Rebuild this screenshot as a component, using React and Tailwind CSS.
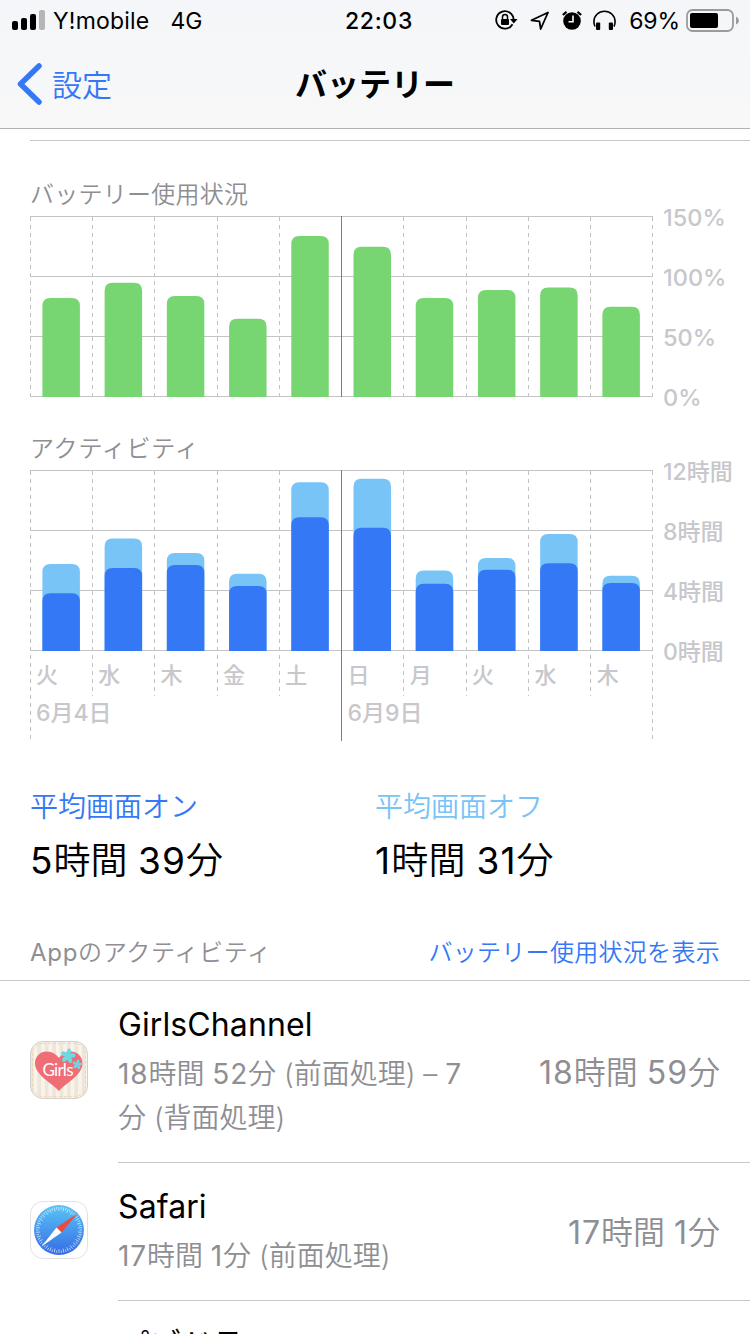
const days = [
    { label: "火", level: 298, off: 564, on: 593.3 },
    { label: "水", level: 282.7, off: 538.5, on: 568 },
    { label: "木", level: 296, off: 553, on: 565 },
    { label: "金", level: 318.7, off: 573.7, on: 586 },
    { label: "土", level: 236, off: 482.3, on: 517.3 },
    { label: "日", level: 246.8, off: 478.7, on: 527.7 },
    { label: "月", level: 298, off: 570.5, on: 583.7 },
    { label: "火", level: 290, off: 558, on: 569.7 },
    { label: "水", level: 287.5, off: 534, on: 563.3 },
    { label: "木", level: 306.8, off: 575.8, on: 583 },
];

const STEP = 62.22;

const barPath = (i, top, bottom) => {
    const x = 12.4 + i * STEP;
    return `M${x} ${bottom}V${top + 8}q0-8 8-8h21.5q8 0 8 8V${bottom}z`;
};

// Latin runs are set a little heavier and wider than the Japanese around them
const Mixed = ({ text }) =>
    text.split(/([A-Za-z0-9]+)/).map((part, i) =>
        i % 2 ? (
            <span key={i} className="font-normal tracking-[0.03em]">{part}</span>
        ) : (
            part
        )
    );

// Grid lines shared by both charts, the dark one marks the start of the week
const Grid = ({ labelEnd, weekEnd }) => (
    <>
        {[0, 60, 120, 180].map((y) => (
            <path key={y} d={`M0 ${y + 0.5}H623`} stroke="#c4c4c6" />
        ))}
        {Array.from({ length: 11 }, (_, i) => {
            const x = Math.round(i * STEP) + 0.5;
            const end = i % 5 === 0 ? weekEnd : labelEnd;
            return i === 5 ? (
                <path key={i} d={`M${x} 0V${weekEnd}`} stroke="#7e7e82" />
            ) : (
                <path key={i} d={`M${x} 1V${end}`} stroke="#c2c2c4" strokeDasharray="4 4" />
            );
        })}
    </>
);

const Axis = ({ labels, className }) => (
    <div className={`-mt-[28px] ml-[10px] flex flex-col font-medium text-[#c7c7cc] ${className}`}>
        {labels.map((label) => (
            <div key={label} className="flex h-[60px] shrink-0 items-center whitespace-nowrap leading-8">
                {label}
            </div>
        ))}
    </div>
);

const StatusBar = () => (
    <div className="grid h-10 grid-cols-3 items-center pl-3 pr-[11px] text-[23px] leading-8">
        <div className="flex items-center whitespace-nowrap">
            <svg width="33" height="20" viewBox="0 0 33 20" className="shrink-0">
                <rect x="0" y="11" width="6" height="9" rx="2" />
                <rect x="9" y="8" width="6" height="12" rx="2" />
                <rect x="18" y="4" width="6" height="16" rx="2" />
                <rect x="27" y="0" width="6" height="20" rx="2" fill="#b5b5b7" />
            </svg>
            <span className="ml-2 pt-0.5 tracking-[0.2px]">Y!mobile</span>
            <span className="ml-[21px] pt-0.5">4G</span>
        </div>
        <div className="pl-[7px] pt-0.5 text-center font-[550] tracking-[0.7px]">22:03</div>
        <div className="flex items-center justify-end whitespace-nowrap">
            <svg width="24" height="20" viewBox="0 0 24 20" className="shrink-0" fill="none" stroke="#000" strokeWidth="1.8">
                <path d="M17.5 14.2A8.7 8.7 0 1 1 18.6 9.5" />
                <path d="M15 9h7.5l-3.7 4.5z" fill="#000" stroke="none" />
                <rect x="6" y="9" width="8" height="6" rx="1" fill="#000" stroke="none" />
                <path d="M7.5 9.5V7a2.5 2.5 0 0 1 5 0v2.5" strokeWidth="1.5" />
            </svg>
            <svg width="20" height="20" viewBox="0 0 20 20" className="ml-[11px] shrink-0" fill="none" stroke="#000" strokeWidth="1.8" strokeLinejoin="round">
                <path d="M18 2.5 1.5 10.3l8 1 1.2 7.7z" />
            </svg>
            <svg width="20" height="20" viewBox="0 0 20 20" className="ml-[12px] shrink-0">
                <circle cx="10" cy="11" r="8.8" />
                <path d="M.8 5 4.500 1.800M19.200 5 15.500 1.800" stroke="#000" strokeWidth="2.200" />
                <path d="M11 5.500v6.200H6.500" fill="none" stroke="#fff" strokeWidth="1.600" />
            </svg>
            <svg width="23" height="20" viewBox="0 0 23 20" className="ml-[11px] shrink-0">
                <path d="M2 16.500C1 14.500.9 12.500.9 11.500a10.600 10.300 0 0 1 21.200 0c0 1 0 3-1.100 5" fill="none" stroke="#000" strokeWidth="1.600" />
                <rect x="3" y="12.500" width="4.200" height="7.500" rx="1" />
                <rect x="15.800" y="12.500" width="4.200" height="7.500" rx="1" />
            </svg>
            <span className="ml-[13px] pt-0.5 tracking-[-0.1px]">69%</span>
            <svg width="53" height="24" viewBox="0 0 53 24" className="ml-[6px] shrink-0">
                <rect x="1" y="2" width="46" height="21" rx="5.500" fill="none" stroke="#9b9b9d" strokeWidth="1.800" />
                <rect x="4" y="5" width="28" height="15" rx="2" />
                <path d="M50 8.500q3 1.500 3 4t-3 4z" fill="#9b9b9d" />
            </svg>
        </div>
    </div>
);

const Flower = ({ x, y, r }) => (
    <g transform={`translate(${x} ${y}) scale(${r})`} fill="#69dce8">
        {[10, 82, 154, 226, 298].map((a) => (
            <ellipse key={a} cx="0" cy="-4.500" rx="2.300" ry="3.500" transform={`rotate(${a})`} />
        ))}
        <circle r="1.500" />
    </g>
);

const GirlsIcon = () => (
    <svg width="58" height="58" viewBox="0 0 58 58">
        <defs>
            <pattern id="stripes" width="7.400" height="58" patternUnits="userSpaceOnUse">
                <rect width="7.400" height="58" fill="#f8f4ed" />
                <rect width="3.700" height="58" fill="#efe6da" />
            </pattern>
        </defs>
        <rect x=".5" y=".5" width="57" height="57" rx="12.500" fill="url(#stripes)" stroke="#d3d0cb" />
        <rect x="2.500" y="2.500" width="53" height="53" rx="10.500" fill="none" stroke="#edd7b0" strokeDasharray="3 2" />
        <path d="M29 50C23 43 5 34 5 22.500 5 15 10.500 10.500 16.500 10.500c6 0 10 3 12.500 6.500 2.500-3.500 6.500-6.500 12-6.500 6.500 0 11.500 5 11.500 12C52.500 34 35 43 29 50z" fill="#ef6d75" />
        <Flower x={38} y={15} r={0.95} />
        <Flower x={47.5} y={23.5} r={0.62} />
        <text x="12.500" y="34.500" fill="#fff" fontFamily="Lato" fontSize="17" fontWeight="400" textLength="31">Girls</text>
    </svg>
);

const SafariIcon = () => (
    <svg width="58" height="58" viewBox="0 0 58 58">
        <defs>
            <linearGradient id="compass" x1="0" y1="0" x2="0" y2="1">
                <stop offset="0" stopColor="#5ac4f6" />
                <stop offset="1" stopColor="#356be6" />
            </linearGradient>
        </defs>
        <rect x=".5" y=".5" width="57" height="57" rx="12.500" fill="#fff" stroke="#e2e2e2" />
        <circle cx="29" cy="29" r="25" fill="url(#compass)" />
        {Array.from({ length: 60 }, (_, i) => (
            <path
                key={i}
                d={i % 2 ? "M29 6v2.500" : "M29 6v4"}
                stroke="#fff"
                strokeWidth=".7"
                opacity=".85"
                transform={`rotate(${i * 6} 29 29)`}
            />
        ))}
        <path d="M47.500 12.500 31.500 31.500 26.500 26.500z" fill="#eb4b3d" />
        <path d="M11.500 45.500 26.500 26.500 31.500 31.500z" fill="#fff" />
    </svg>
);

const AppRow = ({ icon, name, detail, total, className }) => (
    <div className={`flex shrink-0 pl-[30px] ${className}`}>
        <div className="flex w-[88px] items-center pb-1">{icon}</div>
        <div className="flex flex-1 items-center justify-between border-b border-[#c8c7cc] pr-[30px]">
            <div>
                <div className="text-[32px] leading-[44px] tracking-[0.1px] text-black">{name}</div>
                <div className="mt-[5px] whitespace-pre-line text-[28px] font-[350] leading-[44px] text-[#8e8e93]">
                    <Mixed text={detail} />
                </div>
            </div>
            <div className="whitespace-nowrap pt-0.5 text-[32px] font-[350] leading-[44px] text-[#8e8e93]">
                <Mixed text={total} />
            </div>
        </div>
    </div>
);

export default function App() {
    return (
        <div className="flex h-[1334px] w-[750px] flex-col overflow-hidden bg-white font-['Inter','Noto_Sans_CJK_JP',sans-serif] text-black">
            <header className="h-[129px] shrink-0 border-b border-[#b2b2b2] bg-linear-to-b from-[#f4f6f9] to-[#f8f8f8]">
                <StatusBar />
                <div className="grid h-[88px] grid-cols-3 items-center">
                    <div className="flex items-center pl-[17px] text-[30px] font-[350] leading-10 text-[#3478f6]">
                        <svg width="26" height="42" viewBox="0 0 26 42" fill="none" stroke="#3478f6" strokeWidth="5.500" strokeLinecap="round" strokeLinejoin="round">
                            <path d="M22 3 3.500 21 22 39" />
                        </svg>
                        <span className="ml-[9px] whitespace-nowrap pt-px">設定</span>
                    </div>
                    <h1 className="whitespace-nowrap pt-0.5 text-center text-[32px] font-bold leading-10">バッテリー</h1>
                </div>
            </header>

            <main className="flex flex-1 flex-col">
                <div className="ml-[30px] mt-[11px] h-px shrink-0 bg-[#c8c7cc]" />

                <h2 className="flex h-[75px] shrink-0 items-end pb-[3px] pl-[30px] text-[24px] font-[350] leading-9 tracking-[0.25px] text-[#8e8e93]">
                    バッテリー使用状況
                </h2>
                <div className="flex h-[181px] shrink-0 pl-[30px]">
                    <svg width="623" height="181" viewBox="0 0 623 181" fill="none" className="shrink-0">
                        <Grid labelEnd={181} weekEnd={181} />
                        {days.map((d, i) => (
                            <path key={i} d={barPath(i, d.level - 216, 181)} fill="#77d672" />
                        ))}
                    </svg>
                    <Axis labels={["150%", "100%", "50%", "0%"]} className="text-[23.500px]" />
                </div>

                <h2 className="flex h-[73px] shrink-0 items-end pb-[3px] pl-[30px] text-[24px] font-[350] leading-9 tracking-[0.8px] text-[#8e8e93]">
                    アクティビティ
                </h2>
                <div className="flex h-[271px] shrink-0 pl-[30px]">
                    <div className="relative w-[623px] shrink-0">
                        <svg width="623" height="271" viewBox="0 0 623 271" fill="none" className="absolute inset-0">
                            <Grid labelEnd={226} weekEnd={271} />
                            {days.map((d, i) => (
                                <g key={i}>
                                    <path d={barPath(i, d.off - 470, 181)} fill="#78c4f6" />
                                    <path d={barPath(i, d.on - 470, 181)} fill="#3478f6" />
                                </g>
                            ))}
                        </svg>
                        <div className="grid grid-cols-10 pt-[189px] text-[22px] font-medium leading-8 text-[#c7c7cc]">
                            {days.map((d, i) => (
                                <span key={i} className="pl-[6px]">{d.label}</span>
                            ))}
                        </div>
                        <div className="mt-[6px] grid grid-cols-2 text-[23px] font-medium leading-8 text-[#c7c7cc]">
                            <span className="pl-[6px]">6月4日</span>
                            <span className="pl-[6px]">6月9日</span>
                        </div>
                    </div>
                    <Axis labels={["12時間", "8時間", "4時間", "0時間"]} className="text-[23px]" />
                </div>

                <div className="grid shrink-0 grid-cols-2 pl-[30px] pr-[30px] pt-[46px]">
                    <div>
                        <div className="text-[28px] font-[350] leading-10 text-[#3478f6]">平均画面オン</div>
                        <div className="mt-[9px] text-[37px] font-[350] leading-[50px]">
                            <Mixed text="5時間 39分" />
                        </div>
                    </div>
                    <div>
                        <div className="text-[28px] font-[350] leading-10 text-[#78c4f6]">平均画面オフ</div>
                        <div className="mt-[9px] text-[37px] font-[350] leading-[50px] tracking-[0.3px]">
                            <Mixed text="1時間 31分" />
                        </div>
                    </div>
                </div>

                <div className="flex h-[95px] shrink-0 items-end justify-between border-b border-[#c8c7cc] px-[30px] pb-[9px] text-[24px] font-[350] leading-9">
                    <span className="tracking-[0.7px] text-[#8e8e93]">
                        <Mixed text="Appのアクティビティ" />
                    </span>
                    <span className="tracking-[0.3px] text-[#3478f6]">バッテリー使用状況を表示</span>
                </div>

                <AppRow
                    className="h-[182px]"
                    icon={<GirlsIcon />}
                    name="GirlsChannel"
                    detail={"18時間 52分 (前面処理) – 7\n分 (背面処理)"}
                    total="18時間 59分"
                />
                <AppRow
                    className="h-[138px]"
                    icon={<SafariIcon />}
                    name="Safari"
                    detail="17時間 1分 (前面処理)"
                    total="17時間 1分"
                />
                <div className="shrink-0 pl-[118px] pt-[22px] text-[32px] leading-[44px] tracking-[-0.8px]">パズドラ</div>
            </main>
        </div>
    );
}
